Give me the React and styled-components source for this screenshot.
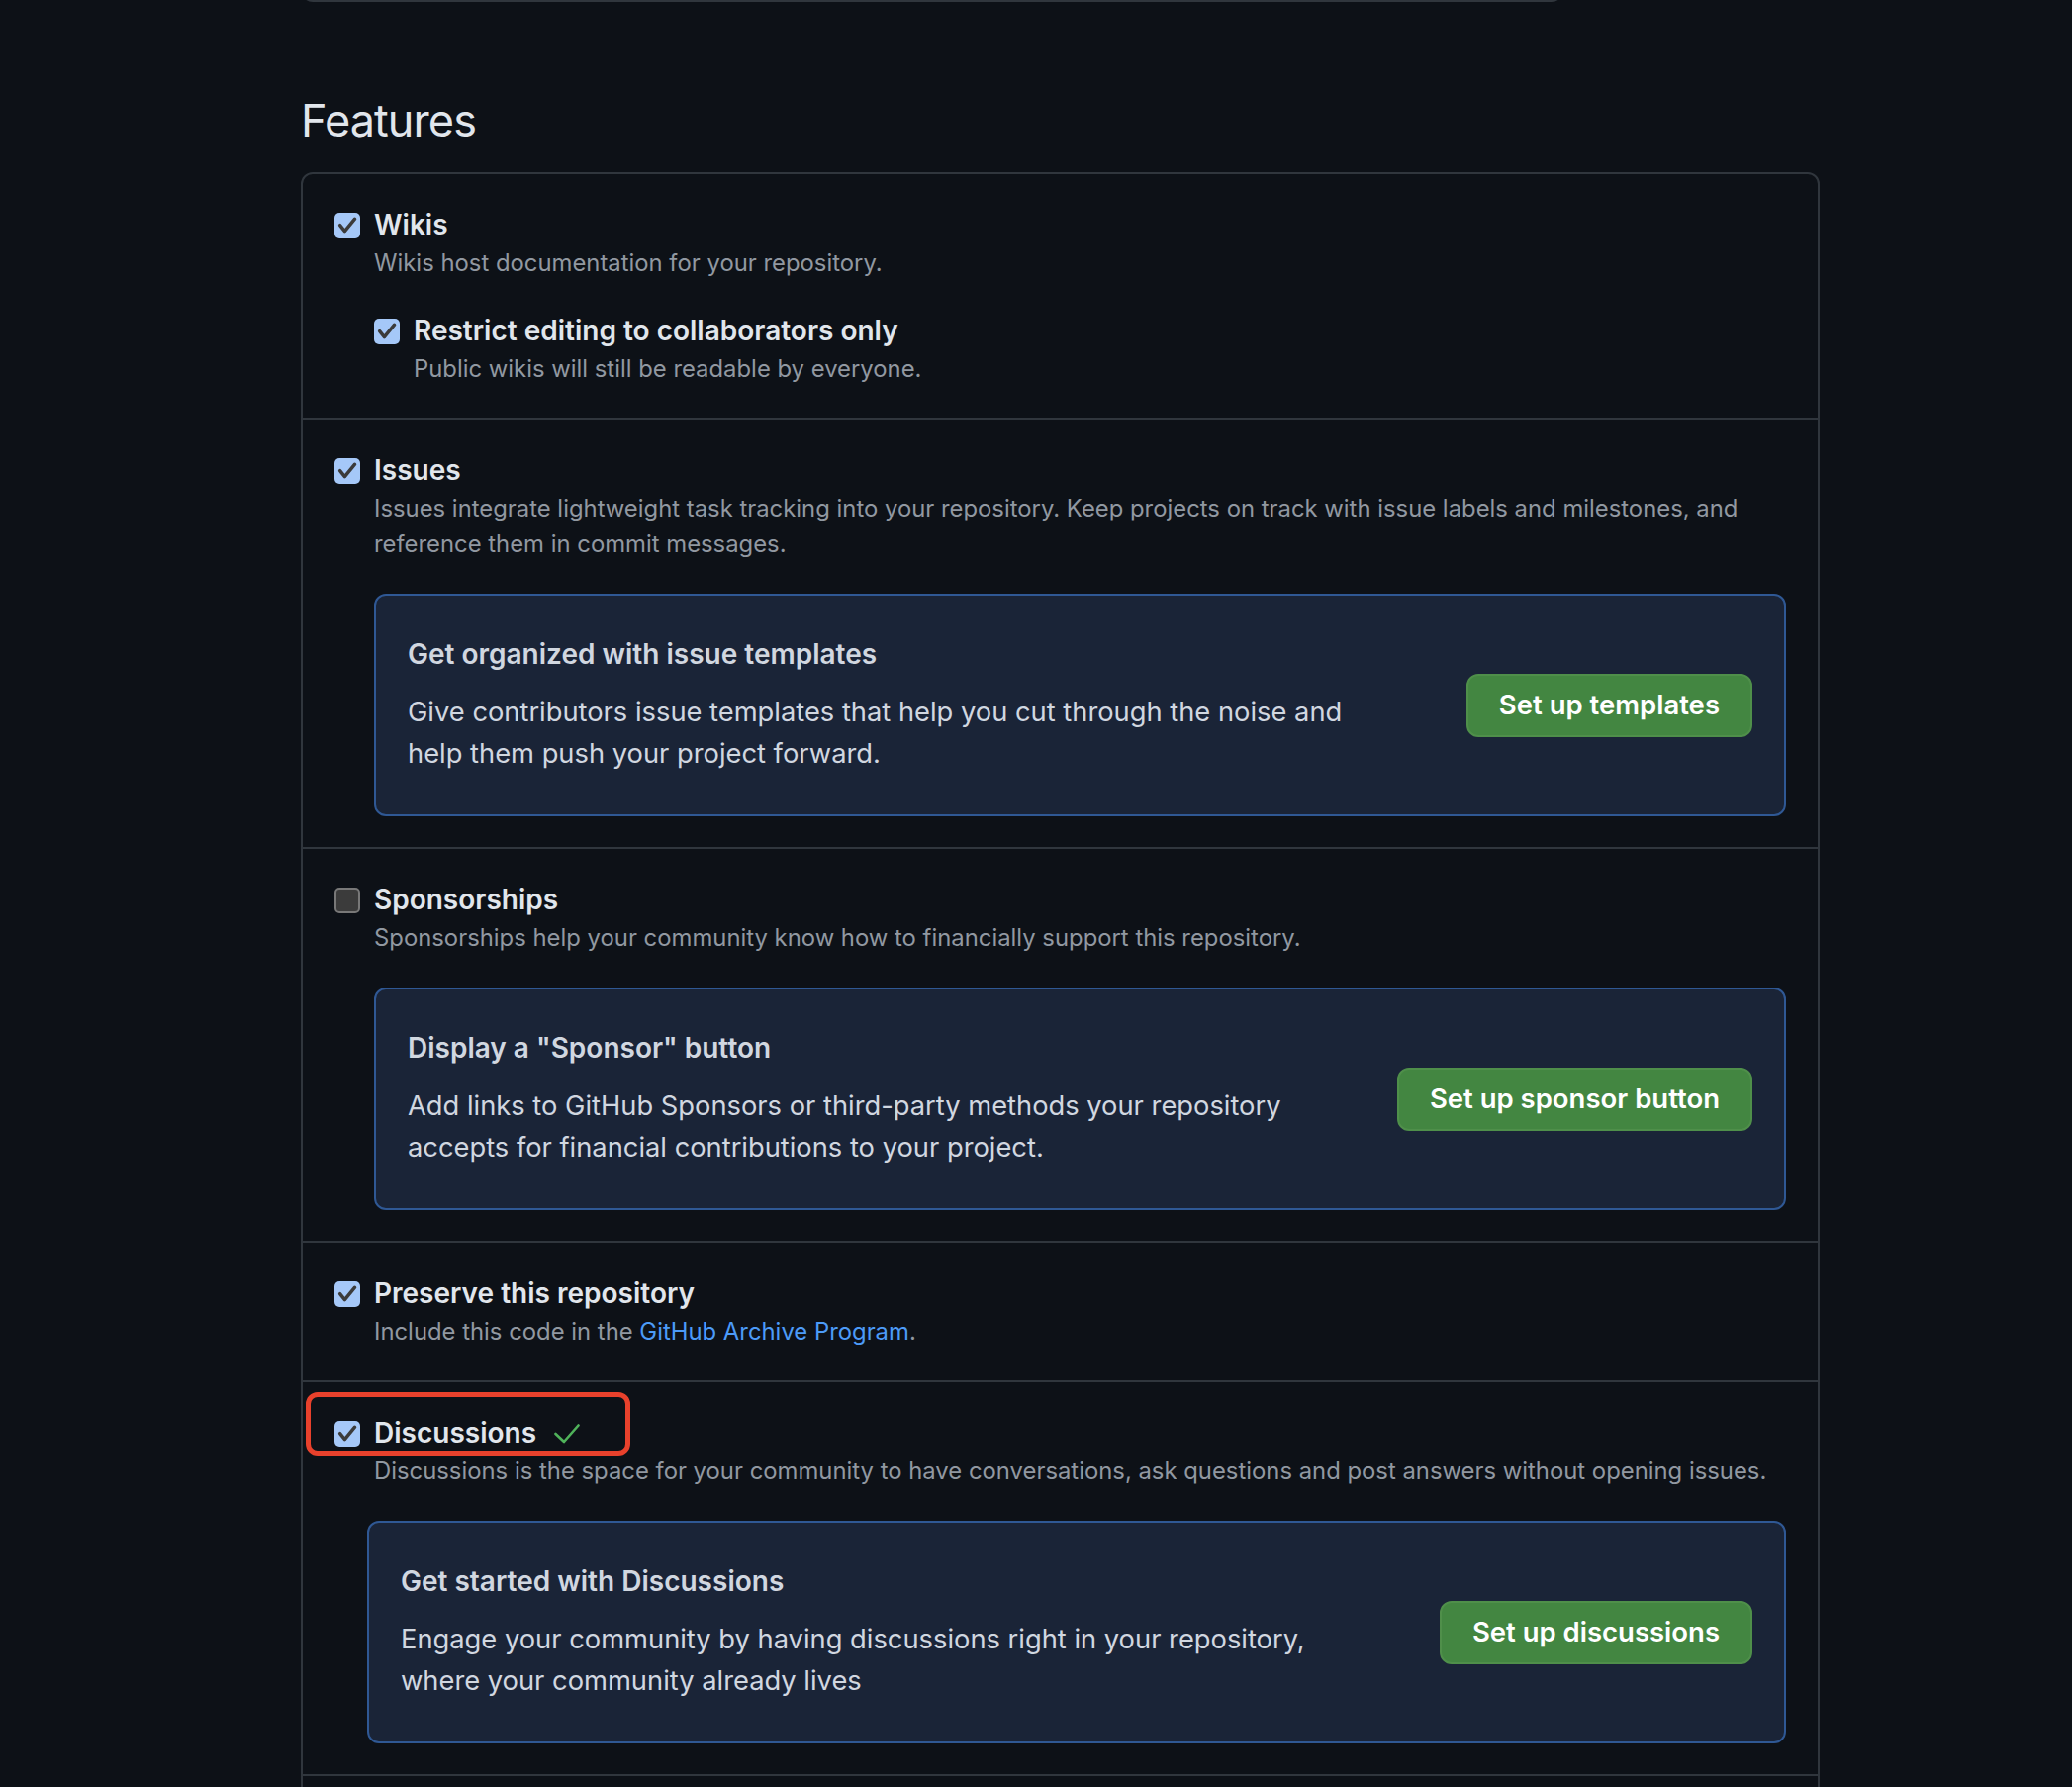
import React from 'react';
import styled, { createGlobalStyle } from 'styled-components';

const GlobalStyle = createGlobalStyle`
  html, body { margin: 0; padding: 0; background: #0d1117; }
  body {
    font-family: Inter, "Noto Sans", "Liberation Sans", sans-serif;
    -webkit-font-smoothing: antialiased;
  }
`;

const Page = styled.main`
  width: 1535px;
  margin-left: 304px;
`;

const PrevBox = styled.div`
  width: 1276px;
  height: 40px;
  margin-top: -38px;
  box-sizing: border-box;
  border: 2px solid #30363d;
  border-top: none;
  border-radius: 0 0 12px 12px;
`;

const Heading = styled.h2`
  margin: 90px 0 22px;
  font-size: 45px;
  font-weight: 400;
  line-height: 60px;
  letter-spacing: -0.9px;
  color: #e1e6ec;
`;

const Card = styled.section`
  border: 2px solid #30363d;
  border-radius: 12px;
`;

const Row = styled.div`
  padding: 31px 32px 31px;
  min-height: ${(p) => (p.$filler ? '80px' : 'auto')};
  & + & {
    border-top: 2px solid #30363d;
  }
`;

const Item = styled.div`
  position: relative;
  display: grid;
  grid-template-columns: 26px 1fr;
  column-gap: 14px;
  margin-top: ${(p) => (p.$nested ? '30px' : '0')};
`;

const CheckCell = styled.div`
  height: 41px;
  display: flex;
  align-items: center;
`;

const Box = styled.span`
  width: 26px;
  height: 26px;
  box-sizing: border-box;
  border-radius: 5px;
  display: inline-flex;
  align-items: center;
  justify-content: center;
  background: ${(p) => (p.$checked ? '#a5c8f8' : '#3b3b3b')};
  border: ${(p) => (p.$checked ? 'none' : '2px solid #787878')};
`;

const Body = styled.div`
  min-width: 0;
`;

const TitleLine = styled.div`
  display: flex;
  align-items: center;
  gap: 18px;
  height: 41px;
`;

const Title = styled.span`
  font-size: 28px;
  font-weight: 600;
  line-height: 41px;
  color: #e1e6ec;
`;

const Desc = styled.p`
  margin: 0;
  font-size: 23.85px;
  line-height: 36px;
  color: #9198a1;
`;

const Link = styled.a`
  color: #4c9bf8;
  text-decoration: none;
`;

const Callout = styled.div`
  margin-top: 32px;
  margin-left: ${(p) => p.$shift || 0}px;
  display: flex;
  align-items: center;
  justify-content: space-between;
  gap: 32px;
  padding: 41px 32px 40px;
  background: #1a2437;
  border: 2px solid #2f5894;
  border-radius: 12px;
`;

const CalloutText = styled.div`
  flex: 1;
  min-width: 0;
`;

const CalloutTitle = styled.h3`
  margin: 0 0 20px;
  font-size: 28px;
  font-weight: 600;
  line-height: 36px;
  color: #d1d7e0;
`;

const CalloutBody = styled.p`
  margin: 0;
  font-size: 27.3px;
  line-height: 42px;
  color: #d1d7e0;
`;

const PrimaryButton = styled.button`
  flex: none;
  height: 64px;
  padding: 0 31px;
  box-sizing: border-box;
  border-radius: 12px;
  border: 2px solid #4f8f4a;
  background: #438641;
  color: #ffffff;
  font-family: inherit;
  font-size: 27.5px;
  font-weight: 600;
  line-height: 1;
  cursor: pointer;
`;

const Highlight = styled.span`
  position: absolute;
  left: -29px;
  top: -21px;
  width: 328px;
  height: 64px;
  box-sizing: border-box;
  border: 5px solid #e8412c;
  border-radius: 12px;
  pointer-events: none;
`;

function Checkbox({ checked }) {
  return (
    <Box $checked={checked}>
      {checked && (
        <svg width="26" height="26" viewBox="0 0 26 26" aria-hidden="true">
          <path
            d="M5.6 12.6 L10.4 18.6 L20.6 6.2"
            fill="none"
            stroke="#3b3b3b"
            strokeWidth="3.4"
            strokeLinecap="round"
            strokeLinejoin="round"
          />
        </svg>
      )}
    </Box>
  );
}

function GreenCheck() {
  return (
    <svg width="26" height="20" viewBox="0 0 26 20" aria-hidden="true">
      <path
        d="M1.5 10 L10 18 L24.5 1.5"
        fill="none"
        stroke="#4fb25a"
        strokeWidth="2.6"
        strokeLinecap="round"
        strokeLinejoin="round"
      />
    </svg>
  );
}

function Feature({ checked, title, desc, nested, highlight, saved, children }) {
  return (
    <Item $nested={nested}>
      {highlight && <Highlight />}
      <CheckCell>
        <Checkbox checked={checked} />
      </CheckCell>
      <Body>
        <TitleLine>
          <Title>{title}</Title>
          {saved && <GreenCheck />}
        </TitleLine>
        <Desc>{desc}</Desc>
        {children}
      </Body>
    </Item>
  );
}

function Promo({ title, lines, action, shift }) {
  return (
    <Callout $shift={shift}>
      <CalloutText>
        <CalloutTitle>{title}</CalloutTitle>
        <CalloutBody>
          {lines[0]}
          <br />
          {lines[1]}
        </CalloutBody>
      </CalloutText>
      <PrimaryButton type="button">{action}</PrimaryButton>
    </Callout>
  );
}

export default function App() {
  return (
    <>
      <GlobalStyle />
      <Page>
        <PrevBox />
        <Heading>Features</Heading>
        <Card>
          <Row>
            <Feature checked title="Wikis" desc="Wikis host documentation for your repository.">
              <Feature
                nested
                checked
                title="Restrict editing to collaborators only"
                desc="Public wikis will still be readable by everyone."
              />
            </Feature>
          </Row>
          <Row>
            <Feature
              checked
              title="Issues"
              desc={
                <>
                  Issues integrate lightweight task tracking into your repository. Keep projects on track with issue labels and milestones, and
                  <br />
                  reference them in commit messages.
                </>
              }
            >
              <Promo
                title="Get organized with issue templates"
                lines={[
                  'Give contributors issue templates that help you cut through the noise and',
                  'help them push your project forward.',
                ]}
                action="Set up templates"
              />
            </Feature>
          </Row>
          <Row>
            <Feature
              checked={false}
              title="Sponsorships"
              desc="Sponsorships help your community know how to financially support this repository."
            >
              <Promo
                title={'Display a "Sponsor" button'}
                lines={[
                  'Add links to GitHub Sponsors or third-party methods your repository',
                  'accepts for financial contributions to your project.',
                ]}
                action="Set up sponsor button"
              />
            </Feature>
          </Row>
          <Row>
            <Feature
              checked
              title="Preserve this repository"
              desc={
                <>
                  Include this code in the <Link href="#">GitHub Archive Program</Link>.
                </>
              }
            />
          </Row>
          <Row>
            <Feature
              checked
              highlight
              saved
              title="Discussions"
              desc="Discussions is the space for your community to have conversations, ask questions and post answers without opening issues."
            >
              <Promo
                shift={-7}
                title="Get started with Discussions"
                lines={[
                  'Engage your community by having discussions right in your repository,',
                  'where your community already lives',
                ]}
                action="Set up discussions"
              />
            </Feature>
          </Row>
          <Row $filler />
        </Card>
      </Page>
    </>
  );
}
